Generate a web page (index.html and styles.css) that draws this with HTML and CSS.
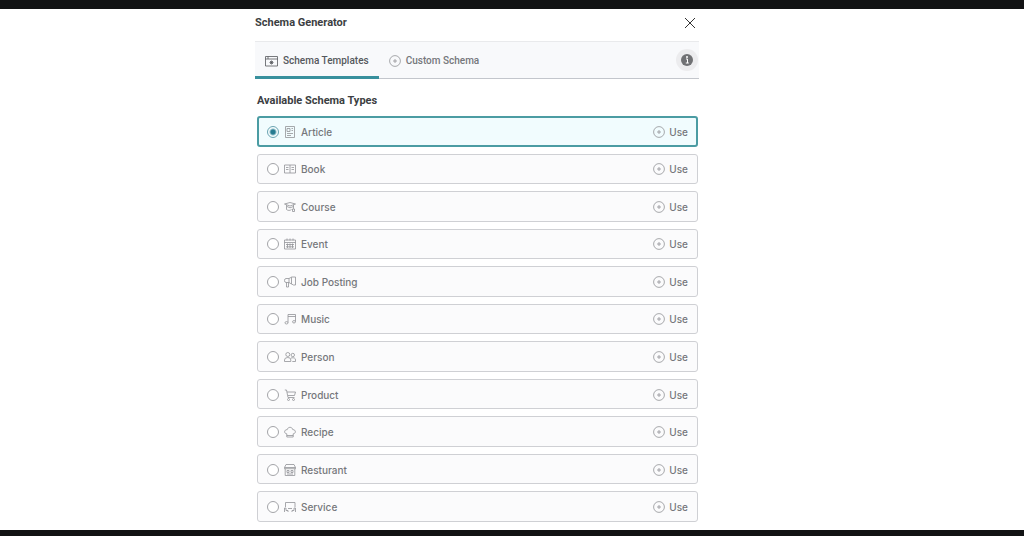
FILE: index.html
```html
<!DOCTYPE html>
<html lang="en">
<head>
<meta charset="utf-8">
<title>Schema Generator</title>
<link rel="stylesheet" href="styles.css">
</head>
<body>
<svg class="sprite" aria-hidden="true">
  <symbol id="plus" viewBox="0 0 12 12"><circle cx="6" cy="6" r="5.4"/><path d="M6 4v4M4 6h4"/></symbol>
</svg>
<main class="stage">
  <section class="panel">
    <header class="panel-head">
      <h1 class="title">Schema Generator</h1>
      <button class="close" type="button" aria-label="Close"><svg class="close-icon" viewBox="0 0 12 12"><path d="M1 1l10 10M11 1L1 11"/></svg></button>
    </header>
    <nav class="tabs">
      <button class="tab tab-active" type="button"><svg class="tab-icon" viewBox="0 0 13 12"><path d="M.5 1.500h12v9.500H.5zM.5 4h12M3 1.500v2.500M6.500 5.500v4M4.500 7.500h4M5 6l3 3M8 6L5 9"/></svg>Schema Templates</button>
      <button class="tab" type="button"><svg class="icon"><use href="#plus"/></svg>Custom Schema</button>
      <button class="info" type="button" aria-label="Information"><svg class="info-icon" viewBox="0 0 12 12"><circle cx="6" cy="6" r="6"/><path d="M5 5h1.500v4M4.800 9h3"/><circle class="info-dot" cx="6" cy="3" r="1"/></svg></button>
    </nav>
    <div class="content">
      <h2 class="subtitle">Available Schema Types</h2>
      <ul class="list">
        <li class="row row-selected"><label class="choice"><input class="radio" type="radio" name="schema" checked><svg class="icon" viewBox="0 0 12 12"><path d="M1.500.500h9v11h-9zM3 2.500h3v3H3zM7.500 2.500H9M7.500 4.500H9M3 7.500h6M3 9.500h4"/></svg>Article</label><button class="use" type="button"><svg class="icon"><use href="#plus"/></svg>Use</button></li>
        <li class="row"><label class="choice"><input class="radio" type="radio" name="schema"><svg class="icon" viewBox="0 0 12 12"><path d="M.5 2h11v8H.500zM6 2v8M2 4.500h2.500M2 6.500h2.500M7.500 4.500H10M7.500 6.500H10"/></svg>Book</label><button class="use" type="button"><svg class="icon"><use href="#plus"/></svg>Use</button></li>
        <li class="row"><label class="choice"><input class="radio" type="radio" name="schema"><svg class="icon" viewBox="0 0 12 12"><path d="M.5 3L6 1.500 11.500 3 6 5zM2.500 4v4.500c1.500 1.200 3.500 1.200 5 0M9.500 3.800v4M8.500 8v2.500h2V8zM3 5.500L6 6.800l3.500-1.300"/></svg>Course</label><button class="use" type="button"><svg class="icon"><use href="#plus"/></svg>Use</button></li>
        <li class="row"><label class="choice"><input class="radio" type="radio" name="schema"><svg class="icon" viewBox="0 0 12 12"><path d="M.5 2h11v9H.500zM.5 4.500h11M3 .500v2M6 .500v2M9 .500v2M2 6.500h8M2 8.800h8M3.500 5.500v4.500M6 5.500v4.500M8.500 5.500v4.500"/></svg>Event</label><button class="use" type="button"><svg class="icon"><use href="#plus"/></svg>Use</button></li>
        <li class="row"><label class="choice"><input class="radio" type="radio" name="schema"><svg class="icon" viewBox="0 0 12 12"><path d="M5 2.500H2Q.500 2.500.500 4.500T2 6.500h3zM5 2.500L7.500 1.200v6.800L5 6.500M7.500 1h4v8H9.500L7.500 8M2.500 6.500v4.500h2V6.500"/></svg>Job Posting</label><button class="use" type="button"><svg class="icon"><use href="#plus"/></svg>Use</button></li>
        <li class="row"><label class="choice"><input class="radio" type="radio" name="schema"><svg class="icon" viewBox="0 0 12 12"><path d="M4 9.500V1.500h7.500v7M4 3.500h7.500"/><ellipse cx="2.500" cy="9.800" rx="1.500" ry="1.200"/><ellipse cx="10" cy="8.800" rx="1.500" ry="1.200"/></svg>Music</label><button class="use" type="button"><svg class="icon"><use href="#plus"/></svg>Use</button></li>
        <li class="row"><label class="choice"><input class="radio" type="radio" name="schema"><svg class="icon" viewBox="0 0 12 12"><circle cx="3.800" cy="3.500" r="2"/><circle cx="8.800" cy="4" r="1.700"/><path d="M.5 10.500V9Q.500 6.500 3.800 6.500T6.800 9v1.500zM7 7Q11.500 6 11.500 9v1.500H8.300"/></svg>Person</label><button class="use" type="button"><svg class="icon"><use href="#plus"/></svg>Use</button></li>
        <li class="row"><label class="choice"><input class="radio" type="radio" name="schema"><svg class="icon" viewBox="0 0 12 12"><path d="M.8 1h1.700l1.500 7.500h6.500M3 3h8.500l-1 3.500H4"/><circle cx="4.500" cy="10.500" r="1"/><circle cx="9.500" cy="10.500" r="1"/></svg>Product</label><button class="use" type="button"><svg class="icon"><use href="#plus"/></svg>Use</button></li>
        <li class="row"><label class="choice"><input class="radio" type="radio" name="schema"><svg class="icon" viewBox="0 0 12 12"><path d="M2.800 11V7.800C-.5 7.500.200 3.300 3.200 3.700 3.800.500 8.200.500 8.800 3.700c3-.4 3.700 3.800.400 4.100V11zM2.800 9.500h6.400"/></svg>Recipe</label><button class="use" type="button"><svg class="icon"><use href="#plus"/></svg>Use</button></li>
        <li class="row"><label class="choice"><input class="radio" type="radio" name="schema"><svg class="icon" viewBox="0 0 12 12"><path d="M2 .500h8l1.500 3v1.200H.500V3.500zM1.200 4.700v6.800h9.600V4.700M.5 3.500h11M3 6.500h2v2H3zM7 6.500h2v2H7zM3 10h6"/></svg>Resturant</label><button class="use" type="button"><svg class="icon"><use href="#plus"/></svg>Use</button></li>
        <li class="row"><label class="choice"><input class="radio" type="radio" name="schema"><svg class="icon" viewBox="0 0 12 12"><path d="M1.500 6V1.500h9.500V6M4 7.500h4M.5 11V7h1.500v2.500H4V11M11.500 11V7H10v2.500H8V11"/></svg>Service</label><button class="use" type="button"><svg class="icon"><use href="#plus"/></svg>Use</button></li>
      </ul>
    </div>
  </section>
</main>
</body>
</html>
```
FILE: styles.css
```css
* { box-sizing: border-box; }
body {
  display: flex;
  min-height: 100vh;
  margin: 0;
  border-top: 9px solid #121314;
  border-bottom: 6px solid #121314;
  background: #fff;
  color: #75777b;
  font: 500 10px/16px Roboto, "Liberation Sans", sans-serif;
}
button {
  padding: 0;
  border: 0;
  background: none;
  color: inherit;
  font: inherit;
}
svg { fill: none; stroke: currentColor; }
.sprite { position: absolute; width: 0; height: 0; }
.stage {
  display: flex;
  flex: 1;
  justify-content: center;
  padding-right: 70px;
}
.panel {
  display: flex;
  flex-direction: column;
  flex: 0 1 444px;
}
.panel-head {
  display: flex;
  align-items: center;
  justify-content: space-between;
  height: 32px;
  padding: 0 3px 4px 0;
}
.title, .subtitle {
  margin: 0;
  color: #3c3e42;
  font-size: 11px;
  font-weight: 700;
}
.close { display: flex; color: #333; }
.close-icon { width: 12px; height: 12px; }
.tabs {
  display: flex;
  height: 38px;
  border-top: 1px solid #e9eaec;
  border-bottom: 1px solid #c3c6cc;
  background: #f8f9fb;
}
.tab {
  display: flex;
  align-items: center;
  gap: 5px;
  padding: 3px 10px 0;
  margin-bottom: -1px;
  border-bottom: 3px solid transparent;
}
.tab-active { border-color: #38909d; color: #55585d; }
.tab-icon { width: 13px; height: 12px; stroke-width: 0.8; }
.info {
  display: flex;
  align-items: center;
  justify-content: center;
  align-self: center;
  width: 22px;
  height: 22px;
  margin-left: auto;
  margin-right: 1px;
  border-radius: 50%;
  background: #ececee;
}
.info-icon { width: 12px; height: 12px; fill: #707174; stroke: none; }
.info-icon path { fill: none; stroke: #fff; }
.info-icon .info-dot { fill: #fff; }
.content {
  display: flex;
  flex: 1;
  flex-direction: column;
  padding: 14px 1px 8px 2px;
}
.list {
  display: grid;
  flex: 1;
  grid-auto-rows: 1fr;
  gap: 7px;
  margin: 7px 0 0;
  padding: 0;
  list-style: none;
  font-family: Inter, "Liberation Sans", sans-serif;
}
.row {
  display: flex;
  align-items: center;
  justify-content: space-between;
  padding: 1px 9px 0;
  border: 1px solid #cfd0d4;
  border-radius: 3px;
  background: #fbfbfc;
}
.row-selected {
  padding: 1px 8px 0;
  border: 2px solid #4b9ca3;
  background: #f1fcfe;
}
.choice { display: flex; align-items: center; flex: 1; }
.icon { width: 12px; height: 12px; stroke: #929397; stroke-width: 0.8; }
.choice .icon { margin: 0 5px; }
.radio {
  appearance: none;
  width: 12px;
  height: 12px;
  margin: 0;
  border: 1px solid #a3a4a8;
  border-radius: 50%;
  background: #fff;
}
.radio:checked {
  border-color: #6aa4b2;
  background: radial-gradient(circle, #267b91 0 2px, #f5fdfe 4px);
}
.use { display: flex; align-items: center; gap: 4px; }
```
